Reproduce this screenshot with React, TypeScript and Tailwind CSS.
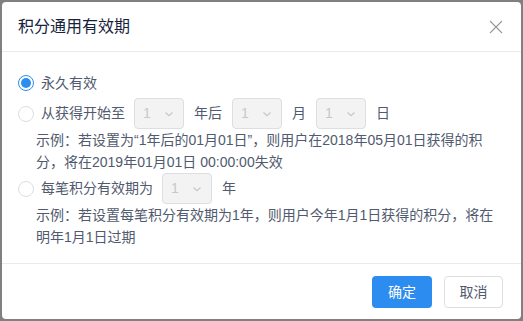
import type { ReactNode } from 'react';

const font = { fontFamily: '"Liberation Sans", "Noto Sans CJK SC", sans-serif' };

function Radio({ checked = false }: { checked?: boolean }) {
  return (
    <span
      className={`flex h-4 w-4 shrink-0 items-center justify-center rounded-full border bg-white ${
        checked ? 'border-[#2d8cf0]' : 'border-[#dcdee2]'
      }`}
    >
      {checked ? <span className="h-[10px] w-[10px] rounded-full bg-[#2d8cf0]" /> : null}
    </span>
  );
}

function Select({ className }: { className?: string }) {
  return (
    <div
      className={`flex h-[31px] w-[50px] shrink-0 items-center justify-between rounded-[4px] border border-[#dcdee2] bg-[#f3f3f3] pl-[8px] pr-[9px] text-[14px] text-[#c5c8ce] ${className ?? ''}`}
    >
      <span>1</span>
      <svg width="10" height="10" viewBox="0 0 10 10" fill="none">
        <path d="M1.5 3.5 5 6.8 8.5 3.5" stroke="#c5c8ce" strokeWidth="1.2" />
      </svg>
    </div>
  );
}

function Row({ checked, children }: { checked?: boolean; children: ReactNode }) {
  return (
    <div className="flex h-[31px] items-center">
      <Radio checked={checked} />
      <div className="ml-[7px] flex items-center">{children}</div>
    </div>
  );
}

function Example({ lines }: { lines: string[] }) {
  return (
    <div className="pl-[18px] text-[14px] leading-[22px] text-[#515a6e]">
      {lines.map((l) => (
        <div key={l} className="whitespace-nowrap">
          {l}
        </div>
      ))}
    </div>
  );
}

export default function App() {
  return (
    <div className="h-[321px] w-[523px] bg-[#808080] p-[2px]" style={font}>
      <div className="flex h-[317px] flex-col rounded-[4px] bg-white">
        <div className="flex h-[50px] shrink-0 items-center justify-between border-b border-[#e8eaec] pl-[16px] pr-[18px]">
          <span className="text-[16px] text-[#17233d]">积分通用有效期</span>
          <svg width="14" height="14" viewBox="0 0 14 14" fill="none">
            <path d="M1 1 13 13M13 1 1 13" stroke="#999" strokeWidth="1.1" />
          </svg>
        </div>

        <div className="flex-1 pl-[16px] pt-[16px] text-[14px] text-[#515a6e]">
          <div className="flex h-[30px] items-center">
            <Radio checked />
            <span className="ml-[7px]">永久有效</span>
          </div>
          <Row>
            <span>从获得开始至</span>
            <Select className="ml-[9px]" />
            <span className="ml-[10px]">年后</span>
            <Select className="ml-[10px]" />
            <span className="ml-[10px]">月</span>
            <Select className="ml-[10px]" />
            <span className="ml-[10px]">日</span>
          </Row>
          <Example
            lines={[
              '示例：若设置为“1年后的01月01日”，则用户在2018年05月01日获得的积',
              '分，将在2019年01月01日 00:00:00失效',
            ]}
          />
          <Row>
            <span>每笔积分有效期为</span>
            <Select className="ml-[9px]" />
            <span className="ml-[10px]">年</span>
          </Row>
          <Example
            lines={['示例：若设置每笔积分有效期为1年，则用户今年1月1日获得的积分，将在', '明年1月1日过期']}
          />
        </div>

        <div className="flex shrink-0 justify-end gap-[12px] border-t border-[#e8eaec] pb-[11px] pr-[18px] pt-[12px]">
          <button
            type="button"
            className="h-[32px] w-[60px] rounded-[4px] bg-[#2d8cf0] text-[14px] text-white"
          >
            确定
          </button>
          <button
            type="button"
            className="h-[32px] w-[59px] rounded-[4px] border border-[#dcdee2] bg-white text-[14px] text-[#515a6e]"
          >
            取消
          </button>
        </div>
      </div>
    </div>
  );
}
